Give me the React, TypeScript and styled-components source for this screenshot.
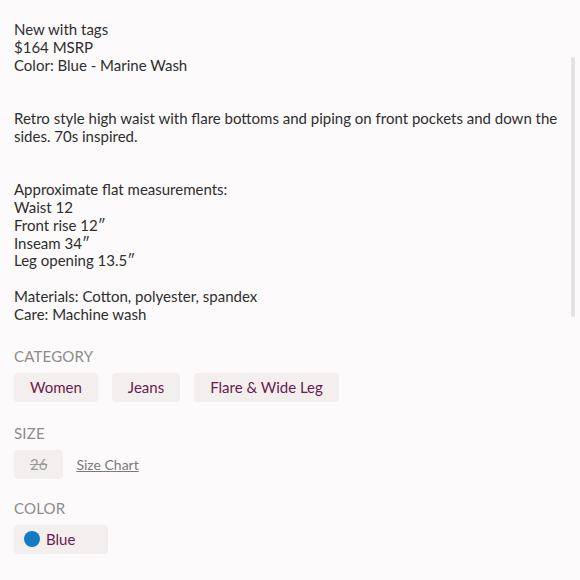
import React from "react";
import styled, { createGlobalStyle } from "styled-components";

const Global = createGlobalStyle`
  html, body { margin: 0; padding: 0; background: #fcfafb; }
  body { font-family: Lato, "Noto Sans", sans-serif; }
`;

const Page = styled.div`
  position: relative;
  box-sizing: border-box;
  width: 580px;
  height: 580px;
  overflow: hidden;
  padding: 21px 14px 0 14px;
  background: #fcfafb;
`;

const Description = styled.div`
  font-size: 15px;
  line-height: 17.8px;
  color: #2e2e2e;
  white-space: pre-wrap;
`;

const Section = styled.div<{ $top: number }>`
  margin-top: ${(p) => p.$top}px;
`;

const Label = styled.div`
  font-size: 15px;
  line-height: 18px;
  color: #8c8c8c;
  text-transform: uppercase;
  letter-spacing: 0.2px;
`;

const Row = styled.div<{ $gap?: number }>`
  display: flex;
  align-items: center;
  gap: ${(p) => p.$gap ?? 14}px;
  margin-top: 8px;
`;

const Chip = styled.div<{ $w?: number }>`
  display: flex;
  align-items: center;
  justify-content: center;
  gap: 6px;
  box-sizing: border-box;
  height: 29px;
  padding: 0 16px;
  min-width: ${(p) => (p.$w ? `${p.$w}px` : "auto")};
  background: #f3efee;
  border-radius: 4px;
  color: #6a1b4d;
  font-size: 15px;
`;

const StruckChip = styled(Chip)`
  color: #9a9a9a;
  text-decoration: line-through;
`;

const LeftChip = styled(Chip)`
  justify-content: flex-start;
  padding: 0 10px;
`;

const Dot = styled.span`
  width: 16px;
  height: 16px;
  border-radius: 50%;
  background: #137bc6;
  flex: none;
`;

const Link = styled.span`
  color: #7a7a7a;
  font-size: 14px;
  text-decoration: underline;
`;

const ScrollThumb = styled.div`
  position: absolute;
  right: 5px;
  top: 57px;
  width: 4px;
  height: 260px;
  border-radius: 2px;
  background: #e4e2e3;
`;

const text = `New with tags
$164 MSRP
Color: Blue - Marine Wash


Retro style high waist with flare bottoms and piping on front pockets and down the sides. 70s inspired.


Approximate flat measurements:
Waist 12
Front rise 12\u2033
Inseam 34\u2033
Leg opening 13.5\u2033

Materials: Cotton, polyester, spandex
Care: Machine wash`;

export default function App() {
  return (
    <Page>
      <Global />
      <Description>{text}</Description>
      <Section $top={23}>
        <Label>Category</Label>
        <Row>
          <Chip>Women</Chip>
          <Chip>Jeans</Chip>
          <Chip>Flare &amp; Wide Leg</Chip>
        </Row>
      </Section>
      <Section $top={22}>
        <Label>Size</Label>
        <Row $gap={13}>
          <StruckChip $w={48}>26</StruckChip>
          <Link>Size Chart</Link>
        </Row>
      </Section>
      <Section $top={20}>
        <Label>Color</Label>
        <Row>
          <LeftChip $w={94}>
            <Dot />
            Blue
          </LeftChip>
        </Row>
      </Section>
      <ScrollThumb />
    </Page>
  );
}
